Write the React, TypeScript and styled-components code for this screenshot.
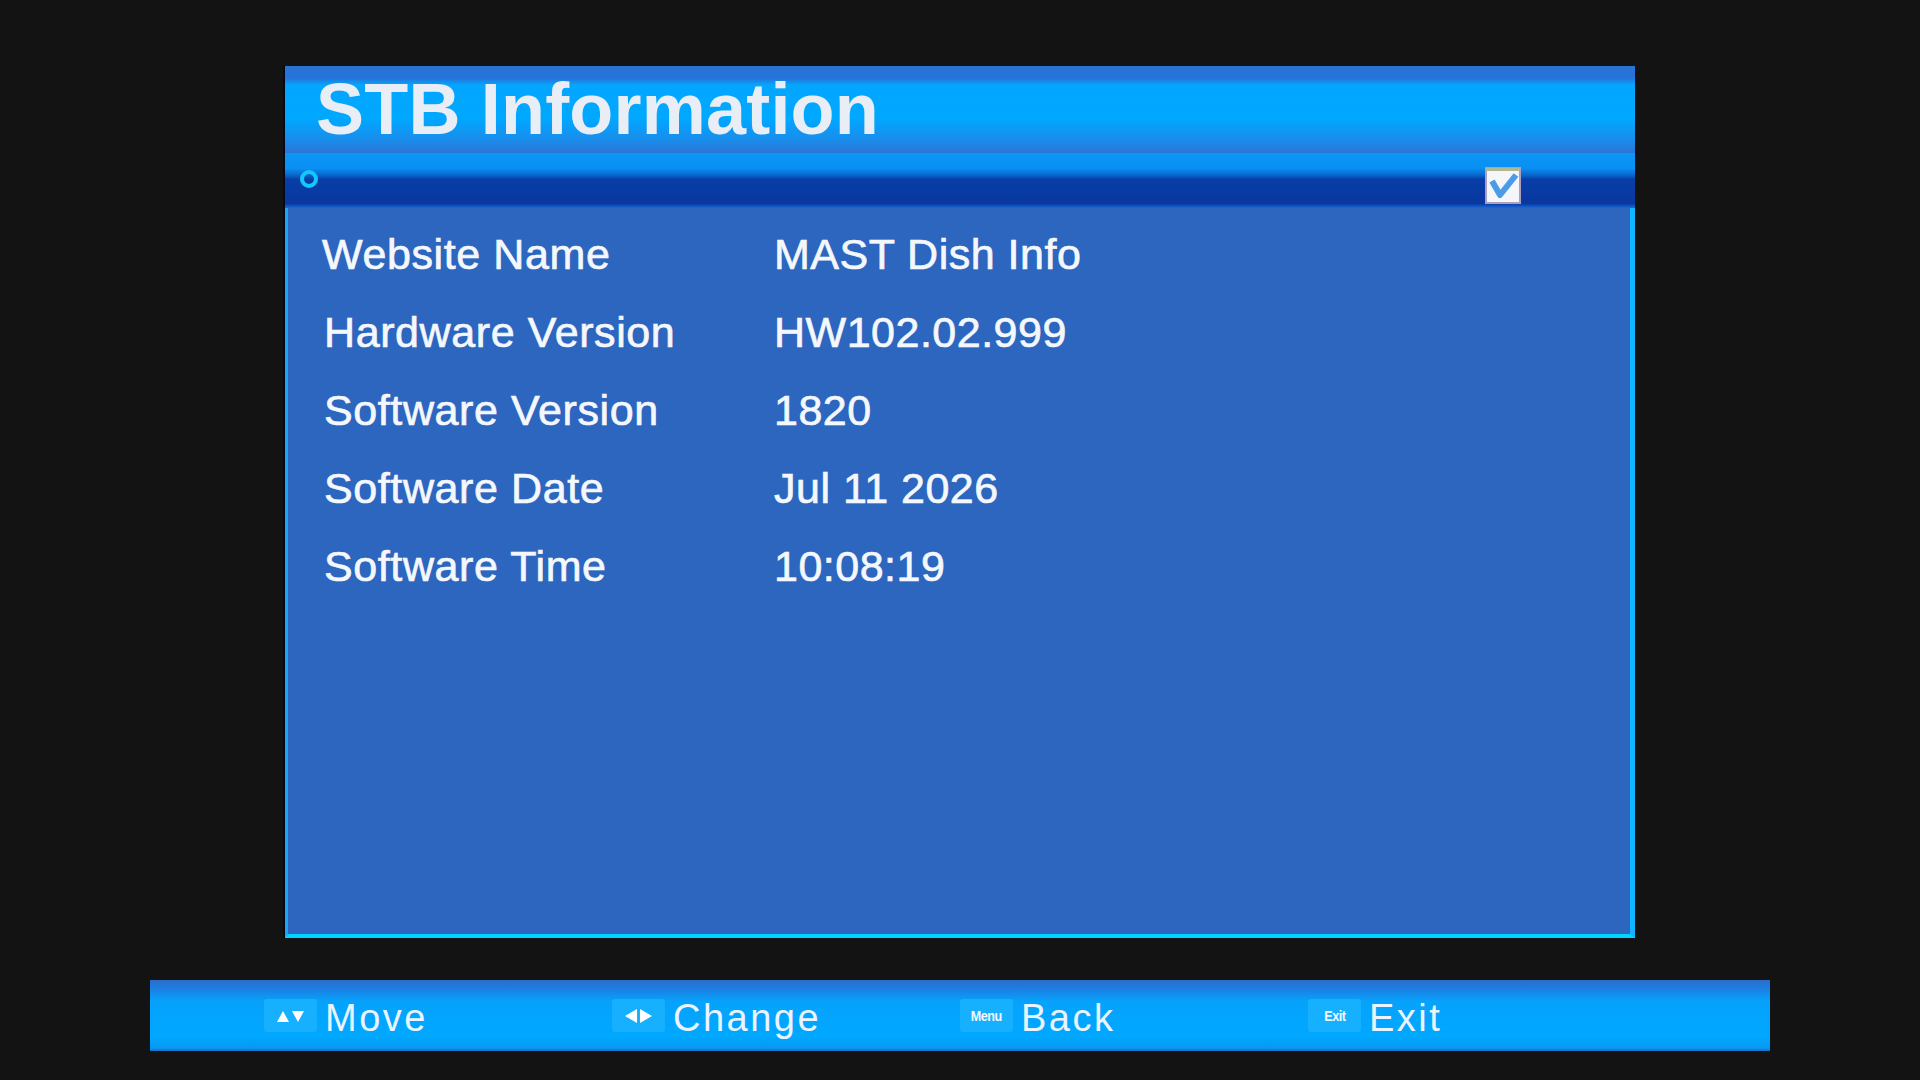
import React from 'react'
import styled, { createGlobalStyle } from 'styled-components'

const GlobalStyle = createGlobalStyle`
  html, body {
    margin: 0;
    padding: 0;
    background: #131313;
  }
`

const rows = [
  { label: 'Website Name', value: 'MAST Dish Info' },
  { label: 'Hardware Version', value: 'HW102.02.999' },
  { label: 'Software Version', value: '1820' },
  { label: 'Software Date', value: 'Jul 11 2026' },
  { label: 'Software Time', value: '10:08:19' },
]

const UpDown = () => (
  <svg width="28" height="14" viewBox="0 0 28 14">
    <polygon points="0,13 6,2 12,13" fill="#fff" />
    <polygon points="15,2 27,2 21,13" fill="#fff" />
  </svg>
)

const LeftRight = () => (
  <svg width="28" height="14" viewBox="0 0 28 14">
    <polygon points="0,7 12,0 12,14" fill="#fff" />
    <polygon points="15,0 27,7 15,14" fill="#fff" />
  </svg>
)

const CheckIcon = () => (
  <svg width="36" height="37" viewBox="0 0 36 37">
    <rect x="1" y="1" width="34" height="35" fill="#f4f6fa" stroke="#a9a0c0" strokeWidth="2" />
    <rect x="1" y="1" width="34" height="3" fill="#b0b890" />
    <path d="M7 14 L15 28 L31 8" fill="none" stroke="#4a9be8" strokeWidth="6" strokeLinejoin="round" />
  </svg>
)

const App = () => {
  return (
    <Screen>
      <GlobalStyle />
      <Panel>
        <TitleBar>
          <Title>STB Information</Title>
        </TitleBar>
        <SubBar>
          <Ring />
          <CheckIcon />
        </SubBar>
        <Content>
          {rows.map((r, i) => (
            <Row key={r.label}>
              <Label $first={i === 0}>{r.label}</Label>
              <Value>{r.value}</Value>
            </Row>
          ))}
        </Content>
      </Panel>
      <HelpBar>
        <HelpItem>
          <KeyBox><UpDown /></KeyBox>
          <HelpText>Move</HelpText>
        </HelpItem>
        <HelpItem>
          <KeyBox><LeftRight /></KeyBox>
          <HelpText>Change</HelpText>
        </HelpItem>
        <HelpItem>
          <KeyBox><KeyLabel>Menu</KeyLabel></KeyBox>
          <HelpText>Back</HelpText>
        </HelpItem>
        <HelpItem>
          <KeyBox><KeyLabel>Exit</KeyLabel></KeyBox>
          <HelpText>Exit</HelpText>
        </HelpItem>
      </HelpBar>
    </Screen>
  )
}

export default App

const Screen = styled.div`
  width: 1920px;
  height: 1080px;
  box-sizing: border-box;
  padding-top: 66px;
  display: flex;
  flex-direction: column;
  align-items: center;
  background: #131313;
  font-family: "Liberation Sans", Arial, sans-serif;
  overflow: hidden;
`

const Panel = styled.div`
  width: 1350px;
  display: flex;
  flex-direction: column;
  box-shadow: -2px 0 0 #050a18;
`

const TitleBar = styled.div`
  height: 87px;
  display: flex;
  align-items: center;
  padding-left: 31px;
  background: linear-gradient(
    to bottom,
    #2b72d4 0%,
    #2574da 14%,
    #04a6fe 22%,
    #00a8ff 60%,
    #1690ee 82%,
    #2a76d6 100%
  );
`

const Title = styled.div`
  font-size: 72px;
  line-height: 87px;
  font-weight: bold;
  color: #e9eef6;
  letter-spacing: 0.2px;
`

const SubBar = styled.div`
  height: 55px;
  display: flex;
  align-items: flex-end;
  justify-content: space-between;
  box-sizing: border-box;
  padding: 0 114px 4px 15px;
  background: linear-gradient(
    to bottom,
    #0c96f6 0%,
    #0990f2 28%,
    #0a66cc 40%,
    #083ea6 48%,
    #0838a0 92%,
    #1a6ad8 100%
  );
`

const Ring = styled.div`
  width: 10px;
  height: 10px;
  border: 4px solid #12c8ff;
  border-radius: 50%;
  margin-bottom: 16px;
`

const Content = styled.div`
  height: 730px;
  box-sizing: border-box;
  padding: 7px 0 0 34px;
  background: #2c66bf;
  border-left: 3px solid #1aa6f4;
  border-right: 5px solid #12b4ff;
  border-bottom: 4px solid #00d4ff;
`

const Row = styled.div`
  display: flex;
  height: 78px;
  align-items: center;
`

const Label = styled.div<{ $first?: boolean }>`
  width: ${(p) => (p.$first ? 452 : 450)}px;
  padding-left: ${(p) => (p.$first ? 0 : 2)}px;
  font-size: 43px;
  line-height: 78px;
  color: #f4f7fc;
  -webkit-text-stroke: 0.7px #f4f7fc;
  letter-spacing: 0.6px;
`

const Value = styled.div`
  font-size: 43px;
  line-height: 78px;
  color: #f4f7fc;
  -webkit-text-stroke: 0.7px #f4f7fc;
  letter-spacing: 0.5px;
`

const HelpBar = styled.div`
  width: 1620px;
  height: 71px;
  margin-top: 42px;
  box-sizing: border-box;
  padding-left: 114px;
  display: flex;
  align-items: center;
  background: linear-gradient(
    to bottom,
    #2c6cc8 0%,
    #1a82e4 14%,
    #06a2fc 30%,
    #00a8ff 80%,
    #0898f2 96%,
    #1a6ac8 100%
  );
`

const HelpItem = styled.div`
  width: 348px;
  display: flex;
  align-items: center;
`

const KeyBox = styled.div`
  width: 53px;
  height: 33px;
  border-radius: 3px;
  background: #16b0ff;
  display: flex;
  align-items: center;
  justify-content: center;
  margin-right: 8px;
`

const KeyLabel = styled.span`
  font-size: 14px;
  font-weight: bold;
  color: #f2f8ff;
  letter-spacing: -0.5px;
  transform: scaleX(0.9);
`

const HelpText = styled.span`
  font-size: 38px;
  line-height: 71px;
  padding-top: 5px;
  color: #eaf4ff;
  letter-spacing: 2.5px;
`
